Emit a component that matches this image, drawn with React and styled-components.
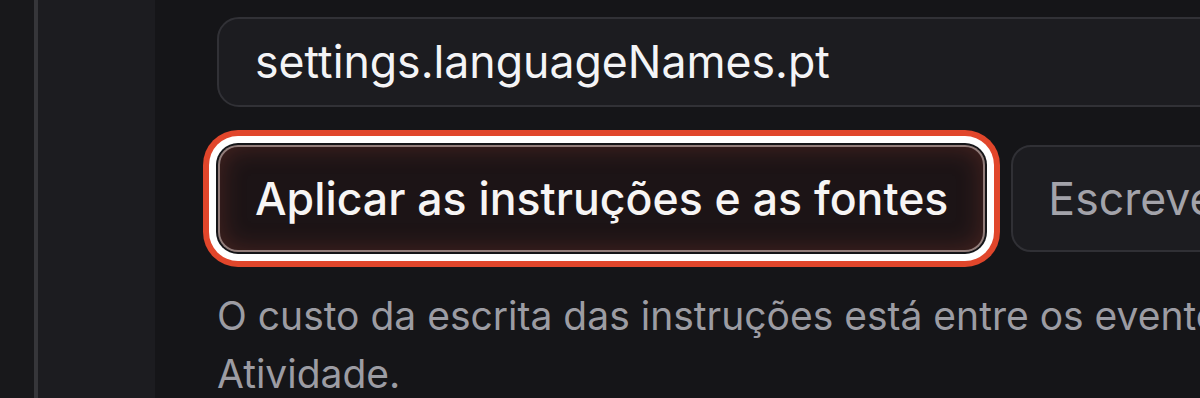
import styled, { createGlobalStyle } from 'styled-components'

const GlobalStyle = createGlobalStyle`
  html, body {
    margin: 0;
    padding: 0;
    background: #151518;
    overflow: hidden;
  }
  * { box-sizing: border-box; }
`

const Page = styled.div`
  display: flex;
  height: 398px;
  width: 1200px;
  overflow: hidden;
  font-family: Inter, "Noto Sans", sans-serif;
`

const Rail = styled.div`
  width: 38px;
  flex-shrink: 0;
  background: #18181b;
  border-right: 4px solid #36363a;
`

const SidePanel = styled.div`
  width: 117px;
  flex-shrink: 0;
  background: #1c1c20;
`

const Main = styled.main`
  flex: 1;
  background: #151518;
  padding: 17px 0 0 62px;
  min-width: 0;
`

const Column = styled.div`
  width: 1180px;
  display: flex;
  flex-direction: column;
`

const Input = styled.div`
  height: 90px;
  border: 2px solid #313136;
  border-radius: 22px;
  background: #1c1c20;
  color: #f4f4f6;
  font-size: 44.6px;
  display: flex;
  align-items: center;
  padding-left: 36px;
  white-space: nowrap;
`

const Choices = styled.div`
  display: flex;
  gap: 26px;
  margin-top: 38px;
  padding-left: 1px;
`

const Choice = styled.button`
  height: 107px;
  flex-shrink: ${p => (p.$active ? 0 : 1)};
  padding: 0 35px;
  border-radius: 20px;
  font-family: inherit;
  font-size: 44.6px;
  font-weight: ${p => (p.$active ? 500 : 400)};
  white-space: nowrap;
  text-align: left;
  color: ${p => (p.$active ? '#f7f5f4' : '#a3a3aa')};
  background: ${p => (p.$active ? '#1c1416' : '#1c1c20')};
  border: 2px solid ${p => (p.$active ? 'rgba(225, 195, 190, 0.6)' : '#303035')};
  box-shadow: ${p =>
    p.$active
      ? 'inset 0 0 26px rgba(190, 80, 60, 0.28), 0 0 0 2px #151518, 0 0 0 9px #ffffff, 0 0 0 15px #e1462b'
      : 'none'};
  overflow: hidden;
`

const Helper = styled.p`
  margin: 35px 0 0;
  font-size: 39px;
  line-height: 58px;
  color: #9c9ca3;
`

export default function App() {
  return (
    <>
      <GlobalStyle />
      <Page>
        <Rail />
        <SidePanel />
        <Main>
          <Column>
            <Input>settings.languageNames.pt</Input>
            <Choices>
              <Choice $active>Aplicar as instruções e as fontes</Choice>
              <Choice>Escrever apenas as instruções</Choice>
            </Choices>
            <Helper>
              O custo da escrita das instruções está entre os eventos de Atividade.
            </Helper>
          </Column>
        </Main>
      </Page>
    </>
  )
}
